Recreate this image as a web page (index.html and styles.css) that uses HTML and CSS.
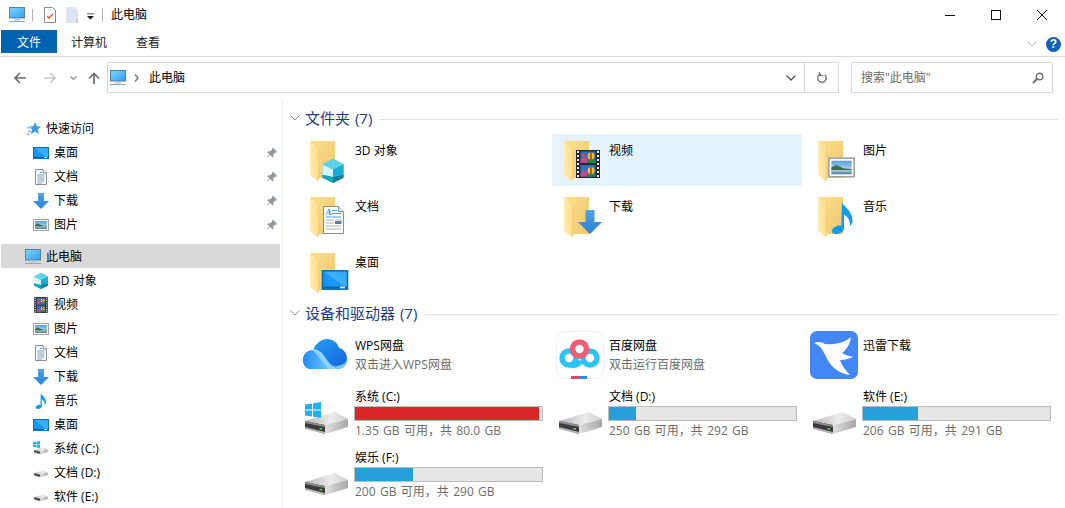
FILE: index.html
```html
<!DOCTYPE html>
<html lang="zh-CN">
<head>
<meta charset="utf-8">
<title>此电脑</title>
<link rel="stylesheet" href="styles.css">
</head>
<body>
<svg class="defs" aria-hidden="true">
  <defs>
    <linearGradient id="g-screen" x1="0" y1="0" x2="1" y2="1"><stop offset="0" stop-color="#7fd6ff"/><stop offset="1" stop-color="#2f9cec"/></linearGradient>
    <linearGradient id="g-desk" x1="0" y1="1" x2="1" y2="0"><stop offset="0" stop-color="#0f8df0"/><stop offset=".5" stop-color="#1b9bf6"/><stop offset=".52" stop-color="#3fb0fb"/><stop offset="1" stop-color="#30a8fa"/></linearGradient>
    <linearGradient id="g-back" x1="0" y1="0" x2="1" y2="1"><stop offset="0" stop-color="#fde08f"/><stop offset="1" stop-color="#eec66a"/></linearGradient>
    <linearGradient id="g-front" x1="0" y1="0" x2="1" y2="0"><stop offset="0" stop-color="#ffecb0"/><stop offset="1" stop-color="#fbdd8d"/></linearGradient>
    <linearGradient id="g-arrow" x1="0" y1="0" x2="0" y2="1"><stop offset="0" stop-color="#4fa3e8"/><stop offset="1" stop-color="#2a80d2"/></linearGradient>
    <linearGradient id="g-sky" x1="0" y1="0" x2="0" y2="1"><stop offset="0" stop-color="#5a9fdc"/><stop offset="1" stop-color="#d8eefa"/></linearGradient>
    <linearGradient id="g-water" x1="0" y1="0" x2="0" y2="1"><stop offset="0" stop-color="#bcd6e2"/><stop offset="1" stop-color="#3f6f9c"/></linearGradient>
    <linearGradient id="g-top" x1="0" y1="0" x2="1" y2="0"><stop offset="0" stop-color="#b4b4b4"/><stop offset=".6" stop-color="#ececec"/><stop offset="1" stop-color="#cfcfcf"/></linearGradient>
    <linearGradient id="g-side" x1="0" y1="0" x2="1" y2="0"><stop offset="0" stop-color="#e0e0e0"/><stop offset="1" stop-color="#a6a6a6"/></linearGradient>
    <linearGradient id="g-wps" x1="0" y1="0" x2="1" y2="1"><stop offset="0" stop-color="#27a4f6"/><stop offset="1" stop-color="#1463dc"/></linearGradient>
    <linearGradient id="g-wps2" x1="0" y1="0" x2="1" y2="0"><stop offset="0" stop-color="#1f8cf0"/><stop offset="1" stop-color="#88d6fc"/></linearGradient>

    <symbol id="i-pc" viewBox="0 0 16 16">
      <rect x=".5" y=".5" width="15" height="10.5" fill="url(#g-screen)" stroke="#55809f"/>
      <rect x="5" y="11.5" width="6" height="2" fill="#b9c9d6"/>
      <rect x="0" y="14" width="16" height="1" fill="#8aa6c0"/>
    </symbol>
    <symbol id="i-star" viewBox="0 0 16 16">
      <path d="M10 1l1.800 4.300 4.200.3-3.200 2.900 1 4.500L10 10.500 6 13l1-4.500L4 5.600l4.200-.3z" fill="#3a9ae6"/>
      <path d="M1 6h5l1.500 1.500H3zM2 9.500h4.500L6 11H3.500zM1 13.500l4-2.500-1 3.500z" fill="#8cc6ef"/>
    </symbol>
    <symbol id="i-pin" viewBox="0 0 12 12">
      <path d="M7 .8l4.200 4.200-1 .8-.9-.3-2 2 .1 2-1 1-2.300-2.400L1 11l-.4-.3 2.900-3.200L1.200 5.200l1-1 2 .1 2-2L5.900 1.400z" fill="#8f98a0"/>
    </symbol>
    <symbol id="i-desk" viewBox="0 0 16 12">
      <rect x=".5" y=".5" width="15" height="11" fill="url(#g-desk)" stroke="#0f6fb8"/>
      <rect x="1" y="10" width="14" height="1" fill="#0a5c9e"/>
      <rect x="11" y="10" width="3" height="1" fill="#d7eeff"/>
    </symbol>
    <symbol id="i-doc" viewBox="0 0 12 16">
      <path d="M.5.5h7.500l3.500 3.500v11.500h-11z" fill="#fff" stroke="#8e8e8e"/>
      <path d="M8 .5v3.500h3.500" fill="#e9e9e9" stroke="#8e8e8e"/>
      <path d="M5 3.500h2M2.500 6h7M2.500 10h7" stroke="#3a9fe0" fill="none"/>
      <path d="M2.500 8h7M2.500 12h7M2.500 14h5" stroke="#9a9a9a" fill="none"/>
    </symbol>
    <symbol id="i-arrow" viewBox="0 0 16 16">
      <path d="M5 0h6v8h5l-8 8-8-8h5z" fill="url(#g-arrow)"/>
    </symbol>
    <symbol id="i-pic" viewBox="0 0 16 12">
      <rect x=".5" y=".5" width="15" height="11" fill="#fff" stroke="#a3a3a3"/>
      <rect x="2" y="2" width="12" height="8" fill="url(#g-sky)"/>
      <path d="M2 6l3-1.500 4 2 5 .5v1H2z" fill="#3c6d4a"/>
      <rect x="2" y="7.500" width="12" height="2.500" fill="url(#g-water)"/>
    </symbol>
    <symbol id="i-cube" viewBox="0 0 16 16">
      <path d="M8 0l7 3.500v9L8 16l-7-3.500v-9z" fill="#1fb8d6"/>
      <path d="M1 3.500L8 7v5l-7-1.500z" fill="#d4f4f6"/>
      <path d="M8 7l7-3.500v7L8 12z" fill="#19aeda"/>
      <path d="M8 0l7 3.500L8 7 1 3.500z" fill="#5ed3e6"/>
      <path d="M1 10.500L8 12v4l-7-3.500z" fill="#16a6b8"/>
      <path d="M8 12l7-1.500v2L8 16z" fill="#0c7f9f"/>
    </symbol>
    <symbol id="i-film" viewBox="0 0 24 28">
      <rect width="24" height="28" fill="#2a2a2a"/>
      <path d="M2 1v26M22 1v26" stroke="#e6e6e6" stroke-width="2" stroke-dasharray="2 2" fill="none"/>
      <rect x="4.500" y="1.500" width="15" height="11.500" fill="#2a6fcc"/>
      <rect x="4.500" y="15" width="15" height="11.500" fill="#2a6fcc"/>
      <path d="M4.500 9l4-3 3 3v4h-7zM4.500 23l4-3 3 3v3.500h-7z" fill="#c24a8e"/>
      <path d="M11 10h8.500v3H11zM11 24h8.500v2.500H11z" fill="#1f8a4a"/>
      <circle cx="15" cy="6" r="3.500" fill="#f3c11d"/>
      <circle cx="15" cy="20.500" r="3.500" fill="#f3c11d"/>
      <path d="M15 2.500v7M15 17v7" stroke="#b2321e" stroke-width="1.500"/>
      <circle cx="7.500" cy="5" r="1.500" fill="#e2502c"/>
    </symbol>
    <symbol id="i-bigdoc" viewBox="0 0 21 28">
      <path d="M.5.5h15l5 5v22h-20z" fill="#fff" stroke="#8c8c8c"/>
      <path d="M15.500.5v5h5" fill="#e8e8e8" stroke="#8c8c8c"/>
      <text class="doc-a" x="2.500" y="9">A</text>
      <path d="M9 4.500h5M9 7.500h9M3 11h15" stroke="#3fa3e4" fill="none"/>
      <path d="M3 14h8M3 17h8M3 20h15M3 23h15" stroke="#b0b0b0" fill="none"/>
      <rect x="12" y="13" width="6.500" height="5" fill="#5f7f8f"/>
      <rect x="12" y="13" width="6.500" height="2" fill="#cfe3ee"/>
    </symbol>
    <symbol id="i-note" viewBox="0 0 21 32">
      <path d="M10 0c1 5 11 8 10.500 20-.2 1.500-1.500 3-2.500 4 .5-6-3-10-6-11.500V26c0 3.500-4 6-8 6-3 0-4-1.500-4-3 0-3 4-5.500 7.500-5.500.8 0 1.500.1 2 .3z" fill="#0b9bf0"/>
    </symbol>
    <symbol id="i-folder" viewBox="0 0 48 48">
      <path d="M6 4h25v37H14z" fill="url(#g-back)"/>
      <path d="M6 4l8 7v33l-8-6z" fill="url(#g-front)"/>
      <path d="M14 11l0 33 1-1V12z" fill="#f2cf7c"/>
    </symbol>
    <symbol id="i-drive" viewBox="0 0 44 23">
      <path d="M0 9L30 0l13 7-23 6z" fill="url(#g-top)"/>
      <path d="M0 9l20 4v9L0 16z" fill="#3c3c3c"/>
      <path d="M0 9l20 4v2L0 11z" fill="#8a8a8a"/>
      <path d="M20 13l23-6v8l-23 7z" fill="url(#g-side)"/>
      <path d="M0 15l20 5v2L0 17z" fill="#b5b5b5"/>
      <rect x="14.500" y="16" width="2.500" height="1.500" fill="#3fdc4a"/>
    </symbol>
    <symbol id="i-win" viewBox="0 0 16 16">
      <path d="M0 2.500L7 1.500v6H0zM8 1.300L16 0v7.500H8zM0 8.500h7v6L0 13.500zM8 8.500h8V16l-8-1.300z" fill="#1fb2f2"/>
    </symbol>
    <symbol id="i-wps" viewBox="0 0 44 30">
      <path d="M8 30C3 30 0 25.500 0 21c0-6 5-10 10-10C13 4 18.500 0 24 0c6 0 11 4 12 9 4.500 1 8 5.500 8 11 0 6-4 10-10 10z" fill="url(#g-wps)"/>
      <path d="M8 30C3 30 0 25.500 0 21c0-6 5-10 10-10 7 0 9 6 13 12 2 3 5 7 11 7z" fill="url(#g-wps2)"/>
      <path d="M10 11c7 0 9 6 13 12 2 3 5 7 11 7" fill="none" stroke="#fff" stroke-width="1.500"/>
      <path d="M10 11c8-1 11 5 15 11 2 3 5 6 9 5 5-1 9-3 10-7 0 6-4 10-10 10H25z" fill="#86d4fb" opacity=".85"/>
    </symbol>
    <symbol id="i-baidu" viewBox="0 0 48 48">
      <rect x=".5" y=".5" width="47" height="47" rx="8" fill="#fff" stroke="#efefef"/>
      <circle cx="13" cy="27" r="7" fill="none" stroke="#2cc3f7" stroke-width="5.500"/>
      <circle cx="34" cy="27" r="7" fill="none" stroke="#2cc3f7" stroke-width="5.500"/>
      <circle cx="23.500" cy="18" r="7" fill="none" stroke="#f25c74" stroke-width="5.500"/>
      <path d="M15 34c4 2 8-1 10-4" fill="none" stroke="#2cc3f7" stroke-width="5"/>
      <rect x="15" y="45" width="8" height="3" fill="#f0436a"/>
      <rect x="23" y="45" width="8" height="3" fill="#2a8cf0"/>
    </symbol>
    <symbol id="i-xunlei" viewBox="0 0 48 48">
      <rect width="48" height="48" rx="7" fill="#4286f8"/>
      <path d="M4 12C8 10 12 11 15 13C24 14 34 12 41 6C40 13 37 18 32 22C35 24 39 25 43 26C39 28 34 29 30 29C32 35 36 40 40 44C33 43 27 40 23 36C18 31 16 25 13 20C11 16 8 14 4 12Z" fill="#fff"/>
    </symbol>
  </defs>
</svg>

<header class="titlebar">
  <svg class="ic qa-pc"><use href="#i-pc"/></svg>
  <span class="qa-sep"></span>
  <svg class="qa-check" viewBox="0 0 12 16">
    <path d="M.5.5h8l3 3v12h-11z" fill="#fff" stroke="#8a8a8a"/>
    <path d="M3 9l2 2 4-4" fill="none" stroke="#e0562a" stroke-width="1.300"/>
  </svg>
  <svg class="qa-page" viewBox="0 0 12 16">
    <path d="M0 0h10v2h2v14H0z" fill="#dce4f2"/>
    <path d="M10 12h2v4h-2z" fill="#c5d0e2"/>
  </svg>
  <svg class="qa-drop" viewBox="0 0 8 7">
    <path d="M0 0h8v1H0zM0 3h8L4 7z" fill="#1a1a1a"/>
  </svg>
  <span class="qa-sep sep-b"></span>
  <span class="title-text">此电脑</span>
  <div class="winctl">
    <span class="winbtn"><svg class="w10" viewBox="0 0 10 10"><path d="M0 5.500h10" stroke="#111"/></svg></span>
    <span class="winbtn"><svg class="w10" viewBox="0 0 10 10"><rect x=".5" y=".5" width="9" height="9" fill="none" stroke="#111"/></svg></span>
    <span class="winbtn"><svg class="w10" viewBox="0 0 10 10"><path d="M0 0l10 10M10 0L0 10" stroke="#111" stroke-width="1"/></svg></span>
  </div>
</header>

<nav class="ribbon">
  <span class="tab tab-file">文件</span>
  <span class="tab">计算机</span>
  <span class="tab">查看</span>
  <svg class="rib-chev" viewBox="0 0 10 6"><path d="M.5.500L5 5 9.500.5" fill="none" stroke="#b5b5b5"/></svg>
  <span class="help">?</span>
</nav>

<div class="navbar">
  <svg class="nav-ic nav-back" viewBox="0 0 12 12"><path d="M12 6H1.500M6 1L1 6l5 5" fill="none" stroke="#6d6d6d" stroke-width="1.600"/></svg>
  <svg class="nav-ic nav-fwd" viewBox="0 0 12 12"><path d="M0 6h10.500M6 1l5 5-5 5" fill="none" stroke="#c9c9c9" stroke-width="1.600"/></svg>
  <svg class="nav-chev" viewBox="0 0 7 5"><path d="M.5.500L3.500 3.500 6.500.5" fill="none" stroke="#8a8a8a" stroke-width="1.200"/></svg>
  <svg class="nav-ic nav-up" viewBox="0 0 12 12"><path d="M6 12V1.500M1 6.500L6 1.500l5 5" fill="none" stroke="#6d6d6d" stroke-width="1.700"/></svg>
  <div class="addr">
    <svg class="ic addr-pc"><use href="#i-pc"/></svg>
    <svg class="addr-sep" viewBox="0 0 5 8"><path d="M1 .5L4 4 1 7.500" fill="none" stroke="#6d6d6d" stroke-width="1.300"/></svg>
    <span class="addr-text">此电脑</span>
    <svg class="addr-drop" viewBox="0 0 10 6"><path d="M.5.500L5 5 9.500.5" fill="none" stroke="#555" stroke-width="1.300"/></svg>
    <span class="addr-refresh">
      <svg class="refresh" viewBox="0 0 12 12"><path d="M3.500 2.500a4.300 4.300 0 1 0 4-.5" fill="none" stroke="#6d6d6d" stroke-width="1.300" transform="rotate(20 6 6)"/><path d="M3.500 0v3.500H7" fill="none" stroke="#6d6d6d" stroke-width="1.200"/></svg>
    </span>
  </div>
  <div class="search">
    <span class="search-text">搜索"此电脑"</span>
    <svg class="search-ic" viewBox="0 0 12 12"><circle cx="7.500" cy="4.500" r="3.300" fill="none" stroke="#6d6d6d" stroke-width="1.400"/><path d="M5 7L1 11" stroke="#6d6d6d" stroke-width="1.800"/></svg>
  </div>
</div>

<main class="main">
  <aside class="side">
    <div class="row top"><svg class="ic"><use href="#i-star"/></svg><span>快速访问</span></div>
    <div class="row"><svg class="ic"><use href="#i-desk"/></svg><span class="grow">桌面</span><svg class="pin"><use href="#i-pin"/></svg></div>
    <div class="row"><svg class="ic"><use href="#i-doc"/></svg><span class="grow">文档</span><svg class="pin"><use href="#i-pin"/></svg></div>
    <div class="row"><svg class="ic"><use href="#i-arrow"/></svg><span class="grow">下载</span><svg class="pin"><use href="#i-pin"/></svg></div>
    <div class="row"><svg class="ic"><use href="#i-pic"/></svg><span class="grow">图片</span><svg class="pin"><use href="#i-pin"/></svg></div>
    <div class="row top sel"><svg class="ic"><use href="#i-pc"/></svg><span>此电脑</span></div>
    <div class="row"><svg class="ic"><use href="#i-cube"/></svg><span>3D 对象</span></div>
    <div class="row"><svg class="ic"><use href="#i-film"/></svg><span>视频</span></div>
    <div class="row"><svg class="ic"><use href="#i-pic"/></svg><span>图片</span></div>
    <div class="row"><svg class="ic"><use href="#i-doc"/></svg><span>文档</span></div>
    <div class="row"><svg class="ic"><use href="#i-arrow"/></svg><span>下载</span></div>
    <div class="row"><svg class="ic"><use href="#i-note"/></svg><span>音乐</span></div>
    <div class="row"><svg class="ic"><use href="#i-desk"/></svg><span>桌面</span></div>
    <div class="row"><svg class="ic" viewBox="0 0 16 16"><use href="#i-drive" x="1" y="6" width="14" height="8"/><use href="#i-win" x="0" y="0" width="7" height="7"/></svg><span>系统 (C:)</span></div>
    <div class="row"><svg class="ic" viewBox="0 0 16 16"><use href="#i-drive" x="1" y="5" width="14" height="8"/></svg><span>文档 (D:)</span></div>
    <div class="row"><svg class="ic" viewBox="0 0 16 16"><use href="#i-drive" x="1" y="5" width="14" height="8"/></svg><span>软件 (E:)</span></div>
  </aside>

  <section class="content">
    <h2 class="ghead">
      <svg class="gchev" viewBox="0 0 10 6"><path d="M.5.500L5 5 9.500.5" fill="none" stroke="#8a8a8a"/></svg>
      <span>文件夹 (7)</span><i class="gline"></i>
    </h2>
    <div class="grid folders">
      <div class="item">
        <svg class="thumb" viewBox="-2 0 48 48"><use href="#i-folder" width="48" height="48"/><use href="#i-cube" x="17" y="22" width="24" height="24"/></svg>
        <div class="txt"><div class="name">3D 对象</div></div>
      </div>
      <div class="item selected">
        <svg class="thumb" viewBox="-2 0 48 48"><use href="#i-folder" width="48" height="48"/><use href="#i-film" x="18" y="13" width="24" height="28"/></svg>
        <div class="txt"><div class="name">视频</div></div>
      </div>
      <div class="item">
        <svg class="thumb" viewBox="-2 0 48 48"><use href="#i-folder" width="48" height="48"/><use href="#i-pic" x="16" y="20" width="27" height="21" preserveAspectRatio="none"/></svg>
        <div class="txt"><div class="name">图片</div></div>
      </div>
      <div class="item">
        <svg class="thumb" viewBox="-2 0 48 48"><use href="#i-folder" width="48" height="48"/><use href="#i-bigdoc" x="19" y="13" width="21" height="28"/></svg>
        <div class="txt"><div class="name">文档</div></div>
      </div>
      <div class="item">
        <svg class="thumb" viewBox="-2 0 48 48"><use href="#i-folder" width="48" height="48"/><use href="#i-arrow" x="20" y="17" width="24" height="24"/></svg>
        <div class="txt"><div class="name">下载</div></div>
      </div>
      <div class="item">
        <svg class="thumb" viewBox="-2 0 48 48"><use href="#i-folder" width="48" height="48"/><use href="#i-note" x="20" y="9" width="21" height="32"/></svg>
        <div class="txt"><div class="name">音乐</div></div>
      </div>
      <div class="item">
        <svg class="thumb" viewBox="-2 0 48 48"><use href="#i-folder" width="48" height="48"/><use href="#i-desk" x="17" y="21" width="28" height="20" preserveAspectRatio="none"/></svg>
        <div class="txt"><div class="name">桌面</div></div>
      </div>
    </div>

    <h2 class="ghead">
      <svg class="gchev" viewBox="0 0 10 6"><path d="M.5.500L5 5 9.500.5" fill="none" stroke="#8a8a8a"/></svg>
      <span>设备和驱动器 (7)</span><i class="gline"></i>
    </h2>
    <div class="grid devices">
      <div class="item app">
        <svg class="thumb" viewBox="0 0 48 48"><use href="#i-wps" x="1" y="8" width="44" height="30"/></svg>
        <div class="txt"><div class="name">WPS网盘</div><div class="sub">双击进入WPS网盘</div></div>
      </div>
      <div class="item app">
        <svg class="thumb"><use href="#i-baidu"/></svg>
        <div class="txt"><div class="name">百度网盘</div><div class="sub">双击运行百度网盘</div></div>
      </div>
      <div class="item app">
        <svg class="thumb"><use href="#i-xunlei"/></svg>
        <div class="txt"><div class="name">迅雷下载</div></div>
      </div>
      <div class="item drive">
        <svg class="thumb" viewBox="0 0 48 48"><use href="#i-drive" x="3" y="25" width="44" height="23"/><use href="#i-win" x="3" y="15" width="16" height="16"/></svg>
        <div class="txt wide"><div class="name">系统 (C:)</div><div class="bar"><div class="fill low" style="width:98.3%"></div></div><div class="sub">1.35 GB 可用，共 80.0 GB</div></div>
      </div>
      <div class="item drive">
        <svg class="thumb" viewBox="0 0 48 48"><use href="#i-drive" x="3" y="25" width="44" height="23"/></svg>
        <div class="txt wide"><div class="name">文档 (D:)</div><div class="bar"><div class="fill" style="width:14.4%"></div></div><div class="sub">250 GB 可用，共 292 GB</div></div>
      </div>
      <div class="item drive">
        <svg class="thumb" viewBox="0 0 48 48"><use href="#i-drive" x="3" y="25" width="44" height="23"/></svg>
        <div class="txt wide"><div class="name">软件 (E:)</div><div class="bar"><div class="fill" style="width:29.2%"></div></div><div class="sub">206 GB 可用，共 291 GB</div></div>
      </div>
      <div class="item drive">
        <svg class="thumb" viewBox="0 0 48 48"><use href="#i-drive" x="3" y="25" width="44" height="23"/></svg>
        <div class="txt wide"><div class="name">娱乐 (F:)</div><div class="bar"><div class="fill" style="width:31%"></div></div><div class="sub">200 GB 可用，共 290 GB</div></div>
      </div>
    </div>
  </section>
</main>
</body>
</html>
```

FILE: styles.css
```css
* { box-sizing: border-box; }
html, body {
  margin: 0;
  height: 508px;
  overflow: hidden;
  background: #fff;
  color: #000;
  font-family: "Open Sans", "Noto Sans CJK SC", sans-serif;
  font-size: 12px;
  line-height: 18px;
}
.defs { position: absolute; width: 0; height: 0; overflow: hidden; }
.doc-a { font: italic bold 9px "Liberation Serif", serif; fill: #2a8fd8; }
.ic { width: 16px; height: 16px; flex: none; display: block; }

/* title bar */
.titlebar { height: 30px; display: flex; align-items: center; padding-left: 9px; }
.qa-sep { width: 1px; height: 12px; background: #b4b4b4; margin-left: 7px; }
.qa-check { width: 12px; height: 16px; margin-left: 11px; }
.qa-page { width: 12px; height: 16px; margin-left: 10px; }
.qa-drop { width: 7px; height: 7px; margin-left: 9px; margin-top: 2px; }
.sep-b { margin-left: 8px; }
.title-text { margin-left: 8px; }
.winctl { margin-left: auto; display: flex; }
.winbtn { width: 46px; height: 30px; display: flex; align-items: center; justify-content: center; }
.w10 { width: 10px; height: 10px; display: block; }

/* ribbon */
.ribbon { height: 27px; display: flex; align-items: flex-start; padding-left: 1px; border-bottom: 1px solid #dadada; }
.tab { height: 23px; line-height: 26px; padding: 0 15px 0 14px; color: #222; }
.tab-file { background: #0063b1; color: #fff; width: 56px; padding: 0; text-align: center; }
.rib-chev { width: 10px; height: 6px; margin-left: auto; margin-top: 11px; }
.help {
  width: 15px; height: 15px; border-radius: 50%; background: #0f62b8; color: #fff;
  font: bold 12px/15px "Liberation Sans", sans-serif; text-align: center;
  margin: 7px 4px 0 9px;
}

/* navigation */
.navbar { height: 41px; display: flex; align-items: flex-start; padding-top: 5px; }
.nav-ic { width: 12px; height: 12px; margin-top: 10px; flex: none; }
.nav-back { margin-left: 14px; }
.nav-fwd { margin-left: 18px; }
.nav-chev { width: 7px; height: 5px; margin: 14px 0 0 14px; flex: none; }
.nav-up { margin-left: 11px; }
.addr {
  margin-left: 7px; width: 732px; height: 31px; border: 1px solid #d9d9d9;
  display: flex; align-items: center;
}
.addr-pc { margin-left: 2px; }
.addr-sep { width: 5px; height: 8px; margin-left: 8px; }
.addr-text { margin-left: 10px; }
.addr-drop { width: 10px; height: 6px; margin-left: auto; margin-right: 8px; }
.addr-refresh { width: 34px; height: 100%; border-left: 1px solid #d9d9d9; display: flex; align-items: center; justify-content: center; }
.refresh { width: 12px; height: 12px; }
.search {
  margin-left: 12px; width: 202px; height: 31px; border: 1px solid #d9d9d9;
  display: flex; align-items: center; padding: 0 8px 0 9px; color: #6d6d6d;
}
.search-text { flex: 1; }
.search-ic { width: 12px; height: 12px; }

/* main */
.main { height: 410px; display: flex; }
.side { width: 283px; flex: none; padding-top: 16px; border-right: 1px solid #eee; margin-top: 2px; overflow: hidden; }
.row { height: 24px; margin: 0 2px 0 1px; padding: 1px 0 0 32px; display: flex; align-items: center; gap: 5px; white-space: nowrap; color: #000; }
.row.top { padding-left: 24px; }
.row.sel { background: #d9d9d9; margin-top: 8px; }
.grow { flex: 1; }
.pin { width: 12px; height: 12px; margin-right: 2px; }

/* content */
.content { flex: 1; min-width: 0; padding-top: 10px; overflow: hidden; }
.ghead {
  margin: 0 7px 6px 0; height: 20px; display: flex; align-items: center; padding-left: 7px;
  font-weight: 400; font-size: 15px; line-height: 20px; color: #1e3a8a; word-spacing: 1px;
}
.gchev { width: 10px; height: 6px; flex: none; margin-right: 5px; }
.gline { flex: 1; height: 1px; background: #e2e2e2; margin-left: 7px; margin-top: 2px; }

.grid { display: grid; grid-template-columns: repeat(3, 250px); column-gap: 4px; padding-left: 15px; }
.folders { grid-auto-rows: 52px; row-gap: 4px; margin-bottom: 5px; }
.devices { grid-template-rows: 56px 61px 61px; }
.item { display: flex; gap: 5px; padding-left: 4px; padding-top: 3px; }
.item.selected { background: #e5f3ff; }
.item.app, .item.drive { padding-top: 2px; }
.thumb { width: 48px; height: 48px; flex: none; display: block; }
.txt { padding-top: 5px; min-width: 0; }
.item.app .txt { padding-top: 6px; }
.item.drive .txt { padding-top: 1px; }
.wide { width: 189px; margin-left: -1px; }
.name { white-space: nowrap; }
.wide .name { padding-left: 1px; }
.sub { color: #6d6d6d; white-space: nowrap; margin-top: 1px; }
.wide .sub { padding-left: 1px; word-spacing: 1.25px; }
.bar { height: 15px; background: #e6e6e6; border: 1px solid #bcbcbc; }
.fill { height: 100%; background: #26a0da; }
.fill.low { background: #da2626; }
```
